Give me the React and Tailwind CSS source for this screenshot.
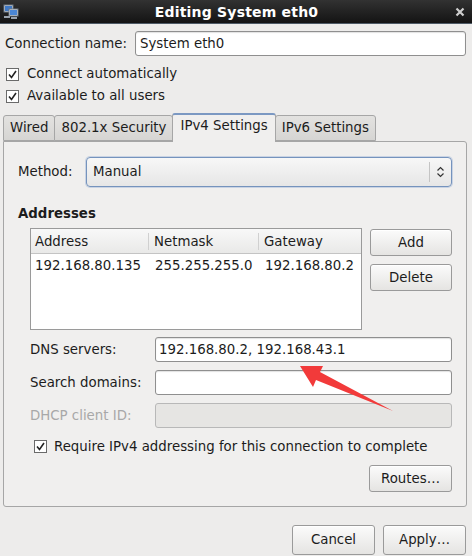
import React from "react";

const font = { fontFamily: '"DejaVu Sans", "Liberation Sans", sans-serif' };

function Check() {
  return (
    <span className="w-[13px] h-[13px] border border-[#6a6a6a] bg-white flex items-center justify-center shrink-0">
      <svg width="11" height="11" viewBox="0 0 11 11">
        <path d="M2 5.5 L4.5 8.5 L9 2" fill="none" stroke="#222" strokeWidth="1.6" />
      </svg>
    </span>
  );
}

function Button({ children, className = "" }) {
  return (
    <div
      className={
        "h-[27px] flex items-center justify-center rounded-[3px] border border-[#9a9a9a] bg-gradient-to-b from-[#fbfbfb] to-[#e5e4e2] shadow-[inset_0_1px_0_#ffffff] " +
        className
      }
    >
      {children}
    </div>
  );
}

function Entry({ value, disabled, className = "" }) {
  return (
    <div
      className={
        "h-[25px] rounded-[3px] border flex items-center px-[3px] " +
        (disabled
          ? "border-[#b8b8b8] bg-[#e6e5e3] "
          : "border-[#8f8f8f] bg-white shadow-[inset_0_1px_1px_rgba(0,0,0,0.12)] ") +
        className
      }
    >
      {value}
    </div>
  );
}

function Tab({ label, active }) {
  return active ? (
    <div className="h-[29px] px-[7px] flex items-start pt-[4px] border border-b-0 border-[#a6a6a6] border-t-[#7b98c2] border-t-2 rounded-t-[3px] bg-[#f0efee] relative -mb-px -ml-px z-10">
      {label}
    </div>
  ) : (
    <div className="h-[26px] px-[6px] flex items-center border border-[#a6a6a6] rounded-t-[3px] bg-gradient-to-b from-[#e3e2e0] to-[#d6d5d3] -ml-px first:ml-0">
      {label}
    </div>
  );
}

export default function App() {
  return (
    <div
      style={font}
      className="relative w-[472px] h-[556px] overflow-hidden bg-[#edeceb] text-[13.33px] text-[#1c1c1c] leading-none"
    >
      {/* window title */}
      <div className="h-[24px] flex items-center bg-gradient-to-b from-[#323232] to-[#141414] border-b border-[#4e5a66] relative">
        <svg className="ml-[3px]" width="16" height="16" viewBox="0 0 16 16">
          <rect x="1" y="1" width="9" height="7" fill="#d8dde3" stroke="#6b7683" />
          <rect x="2" y="2" width="7" height="5" fill="#3f78c4" />
          <rect x="6" y="5" width="9" height="7" fill="#e2e6ea" stroke="#6b7683" />
          <rect x="7" y="6" width="7" height="5" fill="#4a86d4" />
          <rect x="1" y="12" width="6" height="2" fill="#9aa3ad" />
          <rect x="8" y="13" width="6" height="2" fill="#9aa3ad" />
        </svg>
        <div className="flex-1 text-center text-white font-bold text-[14px] tracking-[0.2px]">
          Editing System eth0
        </div>
        <svg className="mr-[6px]" width="12" height="12" viewBox="0 0 12 12">
          <path d="M2.5 2.5 L9.5 9.5 M9.5 2.5 L2.5 9.5" stroke="#cfcfcf" strokeWidth="2.2" />
        </svg>
      </div>

      {/* connection name */}
      <div className="flex items-center mt-[7px] pl-[5px] pr-[6px]">
        <span className="w-[130px]">Connection name:</span>
        <Entry value="System eth0" className="flex-1 pl-[4px]" />
      </div>

      <div className="flex items-center gap-[8px] pl-[6px] mt-[11px] h-[14px]">
        <Check />
        <span>Connect automatically</span>
      </div>
      <div className="flex items-center gap-[8px] pl-[6px] mt-[8px] h-[14px]">
        <Check />
        <span>Available to all users</span>
      </div>

      {/* tabs */}
      <div className="flex items-end pl-[3px] mt-[9px] h-[29px]">
        <Tab label="Wired" />
        <Tab label="802.1x Security" />
        <Tab label="IPv4 Settings" active />
        <Tab label="IPv6 Settings" />
      </div>

      {/* notebook page */}
      <div className="ml-[3px] w-[464px] h-[366px] border border-[#a6a6a6] rounded-b-[3px] rounded-tr-[3px] bg-[#f0efee] flex flex-col pt-[15px]">
        <div className="flex items-center pl-[14px] pr-[14px]">
          <span className="w-[68px]">Method:</span>
          <div className="flex-1 h-[30px] rounded-[4px] border border-[#7593bd] bg-gradient-to-b from-[#f7f7f7] to-[#e6e6e6] flex items-center shadow-[0_0_0_1px_rgba(130,160,205,0.35)]">
            <span className="flex-1 pl-[6px]">Manual</span>
            <span className="w-px h-[20px] bg-[#c4c4c4]" />
            <svg className="mx-[6px]" width="9" height="12" viewBox="0 0 9 12">
              <path d="M1.5 4.5 L4.5 1.5 L7.5 4.5 M1.5 7.5 L4.5 10.5 L7.5 7.5" fill="none" stroke="#333" strokeWidth="1.2" />
            </svg>
          </div>
        </div>

        <div className="pl-[14px] mt-[20px] font-bold">Addresses</div>

        <div className="flex pl-[26px] pr-[14px] mt-[8px]">
          <div className="w-[332px] h-[102px] border border-[#9a9a9a] bg-white flex flex-col">
            <div className="h-[25px] flex items-center bg-gradient-to-b from-[#f8f8f8] to-[#e9e9e8] border-b border-[#c4c4c4]">
              <span className="w-[118px] pl-[4px] border-r border-[#d0d0d0] h-[17px] flex items-center">Address</span>
              <span className="w-[110px] pl-[5px] border-r border-[#d0d0d0] h-[17px] flex items-center">Netmask</span>
              <span className="pl-[5px]">Gateway</span>
            </div>
            <div className="h-[22px] flex items-center">
              <span className="w-[118px] pl-[4px]">192.168.80.135</span>
              <span className="w-[110px] pl-[6px]">255.255.255.0</span>
              <span className="pl-[6px]">192.168.80.2</span>
            </div>
          </div>
          <div className="flex-1 flex flex-col pl-[8px] pt-[1px] gap-[8px]">
            <Button>Add</Button>
            <Button>Delete</Button>
          </div>
        </div>

        <div className="flex items-center pl-[26px] pr-[14px] mt-[7px]">
          <span className="w-[125px]">DNS servers:</span>
          <Entry value="192.168.80.2, 192.168.43.1" className="flex-1" />
        </div>
        <div className="flex items-center pl-[26px] pr-[14px] mt-[8px]">
          <span className="w-[125px]">Search domains:</span>
          <Entry value="" className="flex-1" />
        </div>
        <div className="flex items-center pl-[26px] pr-[14px] mt-[8px] text-[#a8a8a8]">
          <span className="w-[125px]">DHCP client ID:</span>
          <Entry value="" disabled className="flex-1" />
        </div>

        <div className="flex items-center gap-[7px] pl-[30px] mt-[11px] h-[14px]">
          <Check />
          <span>Require IPv4 addressing for this connection to complete</span>
        </div>

        <div className="flex justify-end pr-[14px] mt-[12px]">
          <Button className="w-[83px]">Routes…</Button>
        </div>
      </div>

      {/* dialog buttons */}
      <div className="flex justify-end gap-[8px] pr-[6px] mt-[18px]">
        <Button className="w-[83px] h-[30px]">Cancel</Button>
        <Button className="w-[83px] h-[30px]">Apply…</Button>
      </div>

      {/* red annotation arrow */}
      <svg className="absolute left-0 top-0 pointer-events-none" width="472" height="556" viewBox="0 0 472 556">
        <polygon
          points="300,366 323,366 320,372 393,411 316,380 313,387"
          fill="#f23a3a"
        />
      </svg>
    </div>
  );
}
